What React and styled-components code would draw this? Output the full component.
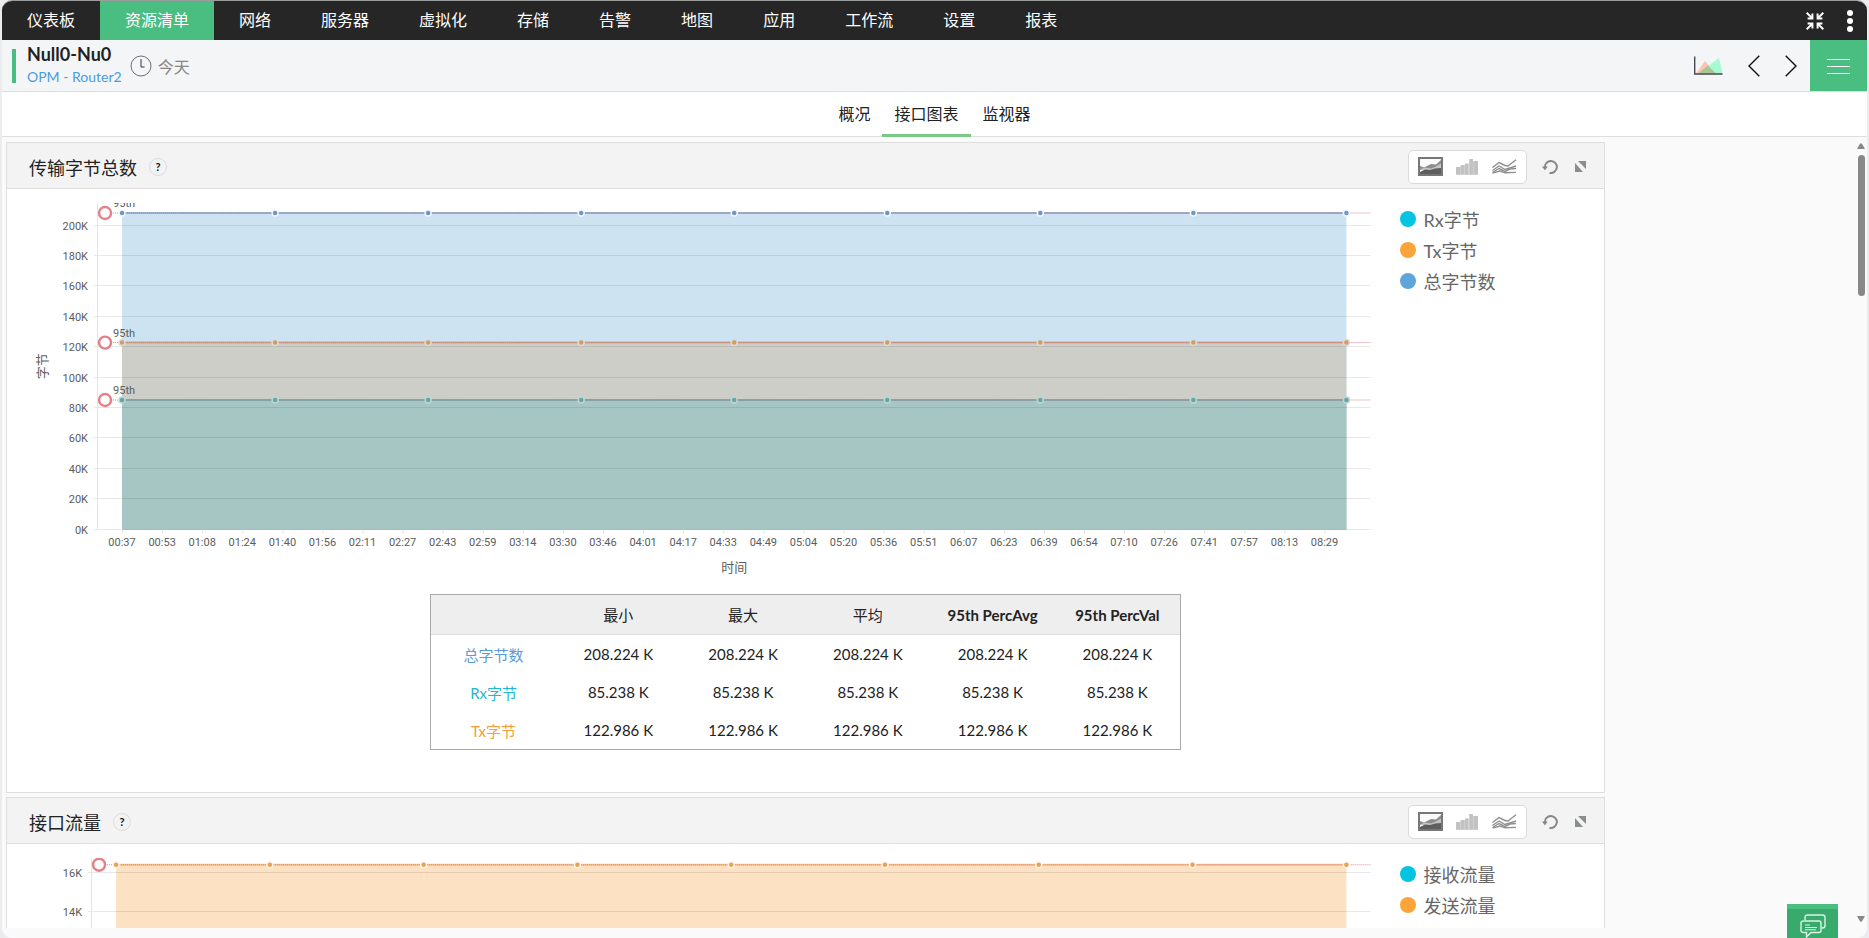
import React from "react";
import styled, { createGlobalStyle } from "styled-components";

const GlobalStyle = createGlobalStyle`
    *{
        box-sizing:border-box;
    }
    body{
        margin:0;
        background-color:#ececee;
        color:#222222;
        font-family:Lato, "Noto Sans CJK SC", sans-serif;
        font-size:16px;
    }
    a{
        text-decoration:none;
    }
    button{
        border:none;
        padding:0;
        background:none;
        font:inherit;
        cursor:pointer;
    }
    svg{
        display:block;
    }
`;

const Frame = styled.div`
    position:relative;
    display:flex;
    flex-direction:column;
    height:100vh;
    margin:0 2px;
    padding-bottom:10px;
    overflow:hidden;
    border-top:1px solid #9a9c9c;
    border-radius:10px;
    background-color:#fafafa;
`;

const NavBar = styled.nav`
    display:flex;
    flex-shrink:0;
    height:39px;
    background-color:#262626;
`;

const NavItem = styled.a`
    padding:0 25px;
    line-height:38px;
    color:#ffffff;
    background-color:${(props) => (props.$active ? "#4abd80" : "transparent")};
`;

const Spacer = styled.div`
    flex:1;
`;

const IconButton = styled.button`
    display:flex;
    align-items:center;
    justify-content:center;
    width:${(props) => props.$width}px;
    height:100%;
    background-color:${(props) => props.$background || "transparent"};
`;

const DeviceBar = styled.header`
    display:flex;
    flex-shrink:0;
    align-items:center;
    height:52px;
    padding-left:10px;
    border-bottom:1px solid #dedede;
    background-color:#f4f5f7;
`;

const StatusMark = styled.div`
    width:4px;
    height:34px;
    background-color:#4abd80;
`;

const DeviceName = styled.div`
    margin:0 8px 0 11px;
    padding-bottom:2px;
    h1{
        margin:0;
        font-size:18px;
        line-height:24px;
        font-weight:700;
    }
    a{
        display:block;
        font-size:14px;
        line-height:22px;
        color:#4a9be0;
    }
`;

const Period = styled.button`
    display:flex;
    align-items:center;
    gap:6px;
    color:#888888;
`;

const TabBar = styled.nav`
    display:flex;
    flex-shrink:0;
    justify-content:center;
    height:45px;
    border-bottom:1px solid #dedede;
    background-color:#ffffff;
`;

const Tab = styled.a`
    height:45px;
    padding:0 12px;
    line-height:44px;
    color:#222222;
    border-bottom:3px solid ${(props) => (props.$active ? "#7bc986" : "transparent")};
`;

const Body = styled.div`
    display:flex;
    flex:1;
    min-height:0;
`;

const Panels = styled.main`
    display:flex;
    flex:1;
    flex-direction:column;
    gap:4px;
    padding:5px 250px 0 4px;
    overflow:hidden;
`;

const Panel = styled.section`
    flex-shrink:0;
    padding-bottom:42px;
    border:1px solid #dedede;
    background-color:#ffffff;
`;

const PanelHeader = styled.div`
    display:flex;
    align-items:center;
    height:46px;
    padding:2px 9px 0 22px;
    border-bottom:1px solid #dedede;
    background-color:#f3f3f3;
    h2{
        margin:0;
        font-size:18px;
        font-weight:400;
    }
`;

const HelpButton = styled.button`
    width:18px;
    height:18px;
    margin-left:12px;
    border:1px solid #dcdcdc;
    border-radius:50%;
    font-size:11px;
    font-weight:700;
    line-height:16px;
    color:#111111;
`;

const ChartTypes = styled.div`
    display:flex;
    height:34px;
    margin-right:8px;
    padding:0 3px;
    border:1px solid #dadada;
    border-radius:5px;
    background-color:#ffffff;
`;

const PanelTools = styled.div`
    display:flex;
    height:34px;
`;

const ChartRow = styled.div`
    display:flex;
`;

const Plot = styled.svg`
    flex:1;
    min-width:0;
    margin-top:14px;
    text{
        font-family:Roboto, "Noto Sans CJK SC", sans-serif;
        font-size:11px;
        fill:#5c5c5c;
    }
    .axis{
        font-size:13px;
    }
`;

const Legend = styled.ul`
    width:14%;
    margin:0;
    padding:14px 0 0 20px;
    list-style:none;
`;

const LegendItem = styled.li`
    display:flex;
    align-items:center;
    gap:7px;
    height:31px;
    font-size:18px;
    color:#666666;
    &::before{
        content:"";
        width:16px;
        height:16px;
        border-radius:50%;
        background-color:${(props) => props.$color};
    }
`;

const Summary = styled.table`
    width:47%;
    margin:14px auto 0;
    table-layout:fixed;
    border:1px solid #a9a9a9;
    border-spacing:0;
    font-size:15px;
    text-align:center;
    thead tr{
        height:40px;
        background-color:#eeeeee;
    }
    thead td, thead th{
        border-bottom:1px solid #dedede;
    }
    tbody tr{
        height:38px;
    }
    th, td{
        padding:0;
    }
`;

const ColumnHead = styled.th`
    font-weight:${(props) => (props.$bold ? 700 : 400)};
`;

const RowHead = styled.th`
    font-weight:400;
    color:${(props) => props.$color};
`;

const ScrollTrack = styled.div`
    display:flex;
    flex-direction:column;
    align-items:center;
    width:12px;
    padding:6px 0;
`;

const ScrollThumb = styled.div`
    width:7px;
    height:141px;
    margin:6px 0 auto;
    border-radius:4px;
    background-color:#888888;
`;

const ChatButton = styled.button`
    position:absolute;
    right:29px;
    bottom:0;
    display:flex;
    justify-content:center;
    width:51px;
    height:34px;
    padding-top:5px;
    border-top:5px solid #4abd80;
    background-color:#38ab6c;
`;

const navItems = ["仪表板", "资源清单", "网络", "服务器", "虚拟化", "存储", "告警", "地图", "应用", "工作流", "设置", "报表"];
const tabs = ["概况", "接口图表", "监视器"];

const times = [
    "00:37", "00:53", "01:08", "01:24", "01:40", "01:56", "02:11", "02:27", "02:43", "02:59", "03:14",
    "03:30", "03:46", "04:01", "04:17", "04:33", "04:49", "05:04", "05:20", "05:36", "05:51", "06:07",
    "06:23", "06:39", "06:54", "07:10", "07:26", "07:41", "07:57", "08:13", "08:29",
];

const bytesSeries = [
    { value: 208.224, area: "#cee3f1", line: "#9db0cf", dot: "#6f97c6", halo: "#f2f7fb", percentile: true },
    { value: 122.986, area: "#cccec7", line: "#d3a58b", dot: "#cf9d6b", halo: "#dcdcd6", percentile: true },
    { value: 85.238, area: "#a6c6c3", line: "#85a9ab", dot: "#5fa9a9", halo: "#c0d5d2", percentile: true },
];

const trafficSeries = [
    { value: 16.4, area: "#fce1c3", line: "#f8c293", dot: "#eda052", halo: "#fff6ec", percentile: false },
];

const bytesRows = [
    { name: "总字节数", color: "#5b9bd5", value: "208.224 K" },
    { name: "Rx字节", color: "#1fb8cf", value: "85.238 K" },
    { name: "Tx字节", color: "#f29c3c", value: "122.986 K" },
];

const bytesLegend = [
    { name: "Rx字节", color: "#04c4e2" },
    { name: "Tx字节", color: "#faa43a" },
    { name: "总字节数", color: "#5da5da" },
];

const trafficLegend = [
    { name: "接收流量", color: "#04c4e2" },
    { name: "发送流量", color: "#faa43a" },
];

const CompressIcon = () => (
    <svg width="18" height="18" viewBox="0 0 18 18" fill="none" stroke="#ffffff" strokeWidth="2">
        <path d="M.7 .7 5.6 5.6M6.4 1.6V6.4H1.6M17.3 .7 12.4 5.6M11.6 1.6V6.4H16.4M.7 17.3 5.6 12.4M6.4 16.4V11.6H1.6M17.3 17.3 12.4 12.4M11.6 16.4V11.6H16.4" />
    </svg>
);

const DotsIcon = () => (
    <svg width="6" height="22" viewBox="0 0 6 22" fill="#ffffff">
        <circle cx="3" cy="3" r="3" />
        <circle cx="3" cy="11" r="3" />
        <circle cx="3" cy="19" r="3" />
    </svg>
);

const ClockIcon = () => (
    <svg width="22" height="22" viewBox="0 0 22 22" fill="none" stroke="#6d6d75">
        <circle cx="11" cy="11" r="10" />
        <path d="M11 4V12H14.5" stroke="#333333" />
    </svg>
);

const MountainIcon = () => (
    <svg width="29" height="19" viewBox="0 0 29 19">
        <path d="M2 17.5 11 5 22 17.5Z" fill="#fdc5ae" />
        <path d="M4 17.5 25 2 28.5 17.5Z" fill="#a5fad0" />
        <path d="M4 17.5 14 9.5 22 17.5Z" fill="#a9c596" />
        <path d="M.7 .5V18H28.5" fill="none" stroke="#444a52" strokeWidth="1.4" />
    </svg>
);

const PrevIcon = () => (
    <svg width="12" height="22" viewBox="0 0 12 22" fill="none" stroke="#111111" strokeWidth="1.4">
        <path d="M11.3 .7 1 11 11.3 21.3" />
    </svg>
);

const NextIcon = () => (
    <svg width="12" height="22" viewBox="0 0 12 22" fill="none" stroke="#111111" strokeWidth="1.4">
        <path d="M.7 .7 11 11 .7 21.3" />
    </svg>
);

const MenuIcon = () => (
    <svg width="23" height="16" viewBox="0 0 23 16" stroke="#ffffff">
        <path d="M0 1.5H23M0 8.5H23M0 15.5H23" />
    </svg>
);

const AreaIcon = () => (
    <svg width="25" height="19" viewBox="0 0 25 19">
        <rect x="1" y="1" width="23" height="17" fill="#fafafa" stroke="#777777" strokeWidth="2" />
        <path d="M2 9 6 10.5 13 7 18 7.5 23 3V13H2Z" fill="#8c8c8c" />
        <path d="M2 12.5 7 10.5 13 11.5 18 9.5 23 6.5V13H2Z" fill="#c4c4c4" />
        <path d="M2 15 7 12.5 12 13 17 11.5 23 11V17H2Z" fill="#5e5e5e" />
    </svg>
);

const BarsIcon = () => (
    <svg width="23" height="16" viewBox="0 0 23 16" fill="#c2c2c2">
        <path d="M0 8H4V16H0ZM4.6 6H8.4V16H4.6ZM9 4.5H12.6V16H9ZM13.2 0H17V16H13.2ZM17.6 2H22V16H17.6Z" />
        <path d="M0 15H22V16H0ZM4 8H5V16H4ZM8 6H9V16H8ZM12.4 4.5H13.4V16H12.4ZM17 2H18V16H17Z" fill="#cfcfcf" />
    </svg>
);

const LinesIcon = () => (
    <svg width="25" height="15" viewBox="0 0 25 15" fill="none" stroke="#8f8f8f" strokeWidth="1.4">
        <path d="M.5 8.5 7 3.5 13 6.5 16 7 24 .8" />
        <path d="M.5 11.5 7 7 13 10.5 24 7" />
        <path d="M.5 13.5 7 9.5 13 12.5 18 10 24 9.5" />
        <path d="M.5 14.2 8 12 13 13.8 24 13.4" />
    </svg>
);

const RefreshIcon = () => (
    <svg width="16" height="16" viewBox="0 0 16 16">
        <path d="M2.9 8.5A6 6 0 1 1 7.5 13.8" fill="none" stroke="#858585" strokeWidth="1.9" />
        <path d="M0 7.5H5.8L2.9 11.2Z" fill="#858585" />
    </svg>
);

const ExpandIcon = () => (
    <svg width="11" height="11" viewBox="0 0 11 11" fill="#8a8d8d">
        <path d="M3 0H11V8ZM0 2 8 11H0Z" />
    </svg>
);

const ChatIcon = () => (
    <svg width="26" height="24" viewBox="0 0 26 24" fill="none" stroke="#d9f5e5" strokeWidth="1.4">
        <path d="M5 6V3.5Q5 1 7.5 1H22.5Q25 1 25 3.5V11.5Q25 14 22.5 14H21.5" />
        <path d="M3.5 7H19Q21 7 21 9V16.5Q21 18.5 19 18.5H11L6.5 23V18.5H3.5Q1 18.5 1 16.5V9Q1 7 3.5 7Z" fill="#38ab6c" />
        <path d="M5 11H10M5 13.5H17M5 15.8H16" strokeWidth="1.1" />
    </svg>
);

const Chart = ({ series, ticks, zero, scale, left, start, height, labels, xTitle, yTitle }) => {
    const end = 1339;
    const right = 1363;
    const yOf = (value) => zero - value * scale;
    const step = (end - start) / 8;
    const points = Array.from({ length: 9 }, (_, i) => start + step * i);

    return (
        <Plot viewBox={`0 0 1373 ${height}`}>
            {series.map((s) => (
                <rect key={s.value} x={start} y={yOf(s.value)} width={end - start} height={zero - yOf(s.value)} fill={s.area} />
            ))}
            {ticks.map((tick) => (
                <g key={tick}>
                    <path d={`M${left - 3} ${Math.round(yOf(tick)) - 0.5}H${right}`} stroke="#000000" strokeOpacity=".09" />
                    <text x={left - 9} y={Math.round(yOf(tick)) + 4} textAnchor="end">{tick}K</text>
                </g>
            ))}
            <path d={`M${left + 0.5} 0V${zero}`} stroke="#e2e5e8" />
            {series.map((s) => (
                <g key={s.value}>
                    <path d={`M${start} ${yOf(s.value)}H${end}`} stroke={s.line} strokeWidth="2" />
                    <path d={`M${start - 17} ${yOf(s.value)}H${right}`} stroke="#e0697a" strokeDasharray="1 1" strokeOpacity=".8" />
                    {points.map((x) => (
                        <circle key={x} cx={x} cy={yOf(s.value)} r="3" fill={s.dot} stroke={s.halo} strokeWidth="1.5" />
                    ))}
                    <circle cx={start - 17} cy={yOf(s.value)} r="6" fill="#ffffff" stroke="#e38186" strokeWidth="2.4" />
                    {s.percentile && <text x={start - 9} y={yOf(s.value) - 6}>95th</text>}
                </g>
            ))}
            {labels.map((label, i) => (
                <g key={label}>
                    <path d={`M${start + 0.5 + i * 40.07} ${zero}v4`} stroke="#dfe3e3" />
                    <text x={start + i * 40.07} y={zero + 16} textAnchor="middle">{label}</text>
                </g>
            ))}
            {xTitle && <text className="axis" x="727" y={zero + 42} textAnchor="middle">{xTitle}</text>}
            {yTitle && (
                <text className="axis" transform={`translate(40 ${zero / 2}) rotate(-90)`} textAnchor="middle">{yTitle}</text>
            )}
        </Plot>
    );
};

const ChartPanel = ({ title, legend, chart, children }) => (
    <Panel>
        <PanelHeader>
            <h2>{title}</h2>
            <HelpButton>?</HelpButton>
            <Spacer />
            <ChartTypes>
                <IconButton $width={37} aria-label="面积图"><AreaIcon /></IconButton>
                <IconButton $width={37} aria-label="柱状图"><BarsIcon /></IconButton>
                <IconButton $width={37} aria-label="折线图"><LinesIcon /></IconButton>
            </ChartTypes>
            <PanelTools>
                <IconButton $width={30} aria-label="刷新"><RefreshIcon /></IconButton>
                <IconButton $width={30} aria-label="展开"><ExpandIcon /></IconButton>
            </PanelTools>
        </PanelHeader>
        <ChartRow>
            <Chart {...chart} />
            <Legend>
                {legend.map((item) => (
                    <LegendItem key={item.name} $color={item.color}>{item.name}</LegendItem>
                ))}
            </Legend>
        </ChartRow>
        {children}
    </Panel>
);

const bytesChart = {
    series: bytesSeries,
    ticks: [0, 20, 40, 60, 80, 100, 120, 140, 160, 180, 200],
    zero: 326.5,
    scale: 1.52,
    left: 90,
    start: 115,
    height: 377,
    labels: times,
    xTitle: "时间",
    yTitle: "字节",
};

const trafficChart = {
    series: trafficSeries,
    ticks: [14, 16],
    zero: 326.5,
    scale: 19.5,
    left: 84,
    start: 109,
    height: 120,
    labels: [],
};

const App = () => {
    return (
        <>
            <GlobalStyle />
            <Frame>
                <NavBar>
                    {navItems.map((item) => (
                        <NavItem key={item} href="#" $active={item === "资源清单"}>{item}</NavItem>
                    ))}
                    <Spacer />
                    <IconButton $width={35} aria-label="退出全屏"><CompressIcon /></IconButton>
                    <IconButton $width={35} aria-label="更多"><DotsIcon /></IconButton>
                </NavBar>
                <DeviceBar>
                    <StatusMark />
                    <DeviceName>
                        <h1>Null0-Nu0</h1>
                        <a href="#">OPM - Router2</a>
                    </DeviceName>
                    <Period><ClockIcon />今天</Period>
                    <Spacer />
                    <IconButton $width={53} aria-label="图表"><MountainIcon /></IconButton>
                    <IconButton $width={37} aria-label="上一个"><PrevIcon /></IconButton>
                    <IconButton $width={38} aria-label="下一个"><NextIcon /></IconButton>
                    <IconButton $width={57} $background="#4abd80" aria-label="菜单"><MenuIcon /></IconButton>
                </DeviceBar>
                <TabBar>
                    {tabs.map((tab) => (
                        <Tab key={tab} href="#" $active={tab === "接口图表"}>{tab}</Tab>
                    ))}
                </TabBar>
                <Body>
                    <Panels>
                        <ChartPanel title="传输字节总数" legend={bytesLegend} chart={bytesChart}>
                            <Summary>
                                <thead>
                                    <tr>
                                        <td />
                                        <ColumnHead>最小</ColumnHead>
                                        <ColumnHead>最大</ColumnHead>
                                        <ColumnHead>平均</ColumnHead>
                                        <ColumnHead $bold>95th PercAvg</ColumnHead>
                                        <ColumnHead $bold>95th PercVal</ColumnHead>
                                    </tr>
                                </thead>
                                <tbody>
                                    {bytesRows.map((row) => (
                                        <tr key={row.name}>
                                            <RowHead $color={row.color}>{row.name}</RowHead>
                                            <td>{row.value}</td>
                                            <td>{row.value}</td>
                                            <td>{row.value}</td>
                                            <td>{row.value}</td>
                                            <td>{row.value}</td>
                                        </tr>
                                    ))}
                                </tbody>
                            </Summary>
                        </ChartPanel>
                        <ChartPanel title="接口流量" legend={trafficLegend} chart={trafficChart} />
                    </Panels>
                    <ScrollTrack>
                        <svg width="8" height="6" viewBox="0 0 8 6" fill="#888888"><path d="M3 .8Q4-.4 5 .8L8 6H0Z" /></svg>
                        <ScrollThumb />
                        <svg width="8" height="6" viewBox="0 0 8 6" fill="#888888"><path d="M0 0H8L5 5.2Q4 6.4 3 5.2Z" /></svg>
                    </ScrollTrack>
                </Body>
                <ChatButton aria-label="聊天"><ChatIcon /></ChatButton>
            </Frame>
        </>
    );
};

export default App;
